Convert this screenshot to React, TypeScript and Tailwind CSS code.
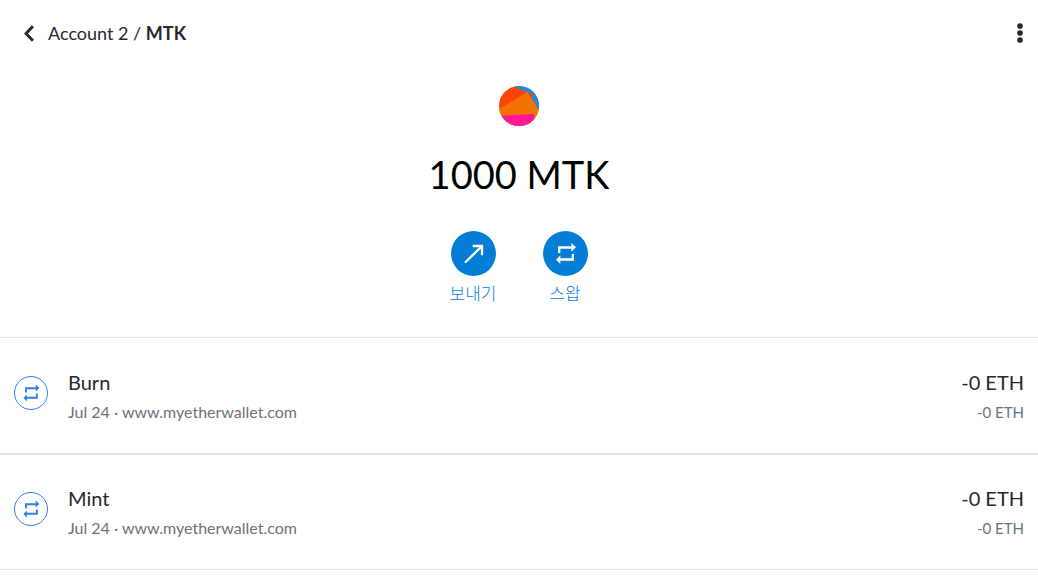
import type { ReactNode } from 'react';

interface Transaction {
  id: number;
  title: string;
  date: string;
  origin: string;
  amount: string;
  secondary: string;
}

const transactions: Transaction[] = [
  { id: 1, title: 'Burn', date: 'Jul 24', origin: 'www.myetherwallet.com', amount: '-0 ETH', secondary: '-0 ETH' },
  { id: 2, title: 'Mint', date: 'Jul 24', origin: 'www.myetherwallet.com', amount: '-0 ETH', secondary: '-0 ETH' },
];

function SwapIcon({ className }: { className?: string }) {
  return (
    <svg viewBox="-1 -1 75 75" fill="currentColor" className={className} aria-hidden="true">
      <path d="M14 35V15H54V5L68 18L54 31V22H21V35Z" />
      <path d="M62 38V58H21V68L8 55L21 42V51H55V38Z" />
    </svg>
  );
}

function SendIcon({ className }: { className?: string }) {
  return (
    <svg viewBox="-1 -1 75 75" fill="none" stroke="currentColor" strokeWidth="7" className={className} aria-hidden="true">
      <path d="M13 62L61 15" strokeLinecap="round" />
      <path d="M34 14H62V42" />
    </svg>
  );
}

function Identicon() {
  return (
    <svg viewBox="0 0 120 120" className="size-10" aria-hidden="true">
      <clipPath id="identicon-clip">
        <circle cx="60" cy="60" r="60" />
      </clipPath>
      <g clipPath="url(#identicon-clip)">
        <rect width="120" height="120" fill="#fb4502" />
        <path d="M40 0L103 27L98 36L125 82V0Z" fill="#2489de" />
        <path d="M-2 71L86 18L120 75V120H0Z" fill="#f27202" />
        <path d="M0 89L105 84V120H0Z" fill="#fc1894" />
      </g>
    </svg>
  );
}

function ActionButton({ label, children }: { label: string; children: ReactNode }) {
  return (
    <button type="button" className="flex w-[92px] cursor-pointer flex-col items-center gap-[6px] text-[#037dd6]">
      <span className="flex size-[45px] items-center justify-center rounded-full bg-[#037dd6] text-white">
        {children}
      </span>
      <span className="text-[17px] leading-6 font-light">{label}</span>
    </button>
  );
}

function TransactionRow({ tx }: { tx: Transaction }) {
  return (
    <li className="flex h-[116px] items-center gap-5 border-b border-[#e3e3e3] px-[14px] not-first:border-t">
      <span className="mb-[6px] flex size-[34px] shrink-0 items-center justify-center rounded-full border border-[#2f80ed] text-[#2f80ed]">
        <SwapIcon className="size-5" />
      </span>
      <div className="min-w-0 flex-1">
        <h2 className="text-xl leading-7 text-[#24292e]">{tx.title}</h2>
        <p className="pt-1 text-base leading-6 text-[#6a737d]">
          {tx.date} · {tx.origin}
        </p>
      </div>
      <div className="text-right">
        <p className="text-xl leading-7 text-[#24292e]">{tx.amount}</p>
        <p className="pt-1 text-[15px] leading-6 text-[#6a737d]">{tx.secondary}</p>
      </div>
    </li>
  );
}

export default function App() {
  return (
    <div className="min-h-screen bg-white font-['Lato','Noto_Sans_CJK_KR',sans-serif]">
      <header className="flex items-center justify-between pt-[19px] pr-[15px] pl-6">
        <nav className="flex items-center gap-[14px] text-lg leading-7 text-[#24292e]">
          <button type="button" aria-label="Back" className="cursor-pointer">
            <svg viewBox="0 0 30 52" className="h-[17px] w-[10px]" fill="none" stroke="currentColor" strokeWidth="9" aria-hidden="true">
              <path d="M27 4L6 26L27 48" />
            </svg>
          </button>
          <span>
            Account 2 / <strong className="font-bold">MTK</strong>
          </span>
        </nav>
        <button type="button" aria-label="Asset options" className="cursor-pointer text-[#24292e]">
          <svg viewBox="0 0 18 60" className="h-5 w-[6px]" fill="currentColor" aria-hidden="true">
            <circle cx="9" cy="9" r="8.5" />
            <circle cx="9" cy="30" r="8.5" />
            <circle cx="9" cy="51" r="8.5" />
          </svg>
        </button>
      </header>

      <main>
        <section className="flex flex-col items-center pt-[39px] pb-[31px]">
          <Identicon />
          <h1 className="pt-5 text-[38px] leading-[56px] text-black">1000 MTK</h1>
          <div className="flex pt-[29px]">
            <ActionButton label="보내기">
              <SendIcon className="size-[25px]" />
            </ActionButton>
            <ActionButton label="스왑">
              <SwapIcon className="size-[25px]" />
            </ActionButton>
          </div>
        </section>

        <ul className="border-t border-[#e3e3e3]">
          {transactions.map(tx => (
            <TransactionRow key={tx.id} tx={tx} />
          ))}
        </ul>
      </main>
    </div>
  );
}
